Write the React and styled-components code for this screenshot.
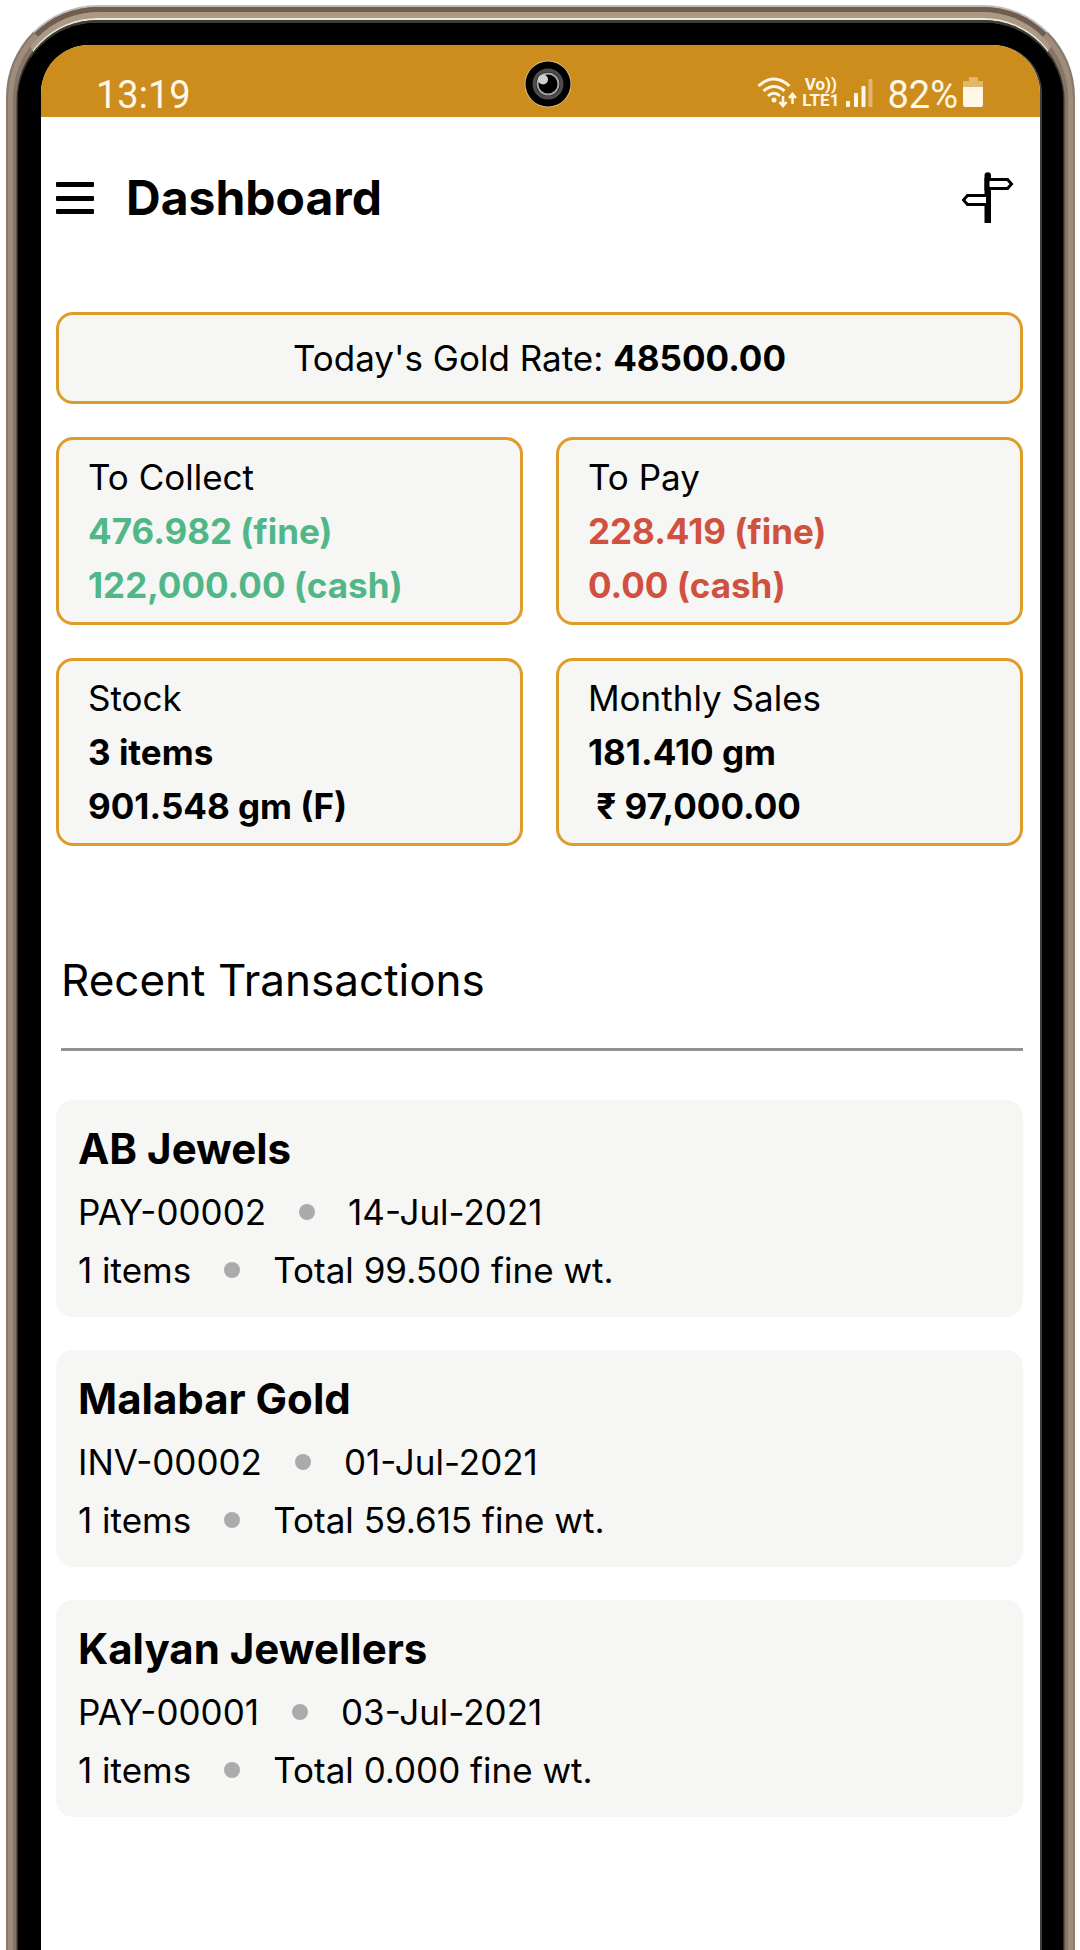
import React from "react";
import styled, { createGlobalStyle } from "styled-components";

const GlobalStyle = createGlobalStyle`
  *, *::before, *::after { box-sizing: border-box; }
  body { margin: 0; background: #fff; color: #000; font-family: Inter, "Open Sans", sans-serif; }
  h1, h2, h3, p, ul, dl, dd, dt { margin: 0; padding: 0; }
`;

const Page = styled.div`
  display: flex;
  min-height: 100vh;
  padding: 5px 5px 0 6px;
`;

/* One metal layer of the phone's bezel */
const Ring = styled.div`
  flex: 1;
  display: flex;
  min-width: 0;
  border-style: solid;
  border-width: ${(p) => p.$top}px ${(p) => p.$side}px 0;
  border-color: ${(p) => p.$topColor} ${(p) => p.$sideColor} transparent;
  border-radius: ${(p) => p.$radius}px ${(p) => p.$radius}px 0 0;
  background: ${(p) => p.$fill};
`;

const Bezel = styled.div`
  flex: 1;
  display: flex;
  min-width: 0;
  padding: 22px 23px 0;
  background: #000;
  border-radius: 78px 78px 0 0;
`;

const Screen = styled.div`
  flex: 1;
  min-width: 0;
  background: #fff;
  border-radius: 48px 48px 0 0;
  box-shadow: 2px 0 0 #3f4041;
`;

const StatusBar = styled.div`
  position: relative;
  display: flex;
  justify-content: space-between;
  align-items: flex-end;
  height: 72px;
  padding: 0 57px 9px 55px;
  border-radius: 48px 48px 0 0;
  background: #cd8d1d;
  color: #fff7e8;
  font-family: Roboto, sans-serif;
`;

const StatusText = styled.span`
  font-size: 38px;
  line-height: 26px;
`;

const StatusIcons = styled.div`
  display: flex;
  align-items: flex-end;
`;

const Network = styled.span`
  display: flex;
  flex-direction: column;
  align-items: center;
  margin: 0 7px 0 4px;
  font-size: 17px;
  font-weight: 700;
  line-height: 16px;
`;

const Percent = styled(StatusText)`
  margin: 0 5px 0 14px;
`;

const Camera = styled.svg`
  position: absolute;
  top: 14px;
  left: 50%;
  width: 50px;
  height: 50px;
  margin-left: -18px;
`;

const Header = styled.header`
  display: flex;
  align-items: center;
  padding: 51px 26px 84px 15px;
`;

const IconButton = styled.button`
  display: flex;
  padding: 0;
  border: 0;
  background: none;
  color: inherit;
`;

const Title = styled.h1`
  flex: 1;
  margin-left: 32px;
  font-size: 48px;
  font-weight: 700;
  line-height: 60px;
`;

const Main = styled.main`
  padding: 0 17px 40px 15px;
`;

const RateCard = styled.p`
  padding: 16px 20px;
  border: 3px solid #df9c28;
  border-radius: 17px;
  background: #f6f6f4;
  font-size: 35px;
  line-height: 54px;
  text-align: center;
`;

const Stats = styled.section`
  display: grid;
  grid-template-columns: 1fr 1fr;
  gap: 33px;
  margin-top: 33px;
`;

const StatCard = styled.dl`
  padding: 10px 29px;
  border: 3px solid #df9c28;
  border-radius: 17px;
  background: #f6f6f4;
  font-size: 35px;
  line-height: 54px;
`;

const StatValue = styled.dd`
  color: ${(p) => p.$color};
  font-weight: 700;
  white-space: pre;
`;

const SectionTitle = styled.h2`
  margin: 104px 0 49px 5px;
  padding-bottom: 38px;
  border-bottom: 3px solid #929292;
  font-size: 44px;
  font-weight: 400;
  line-height: 60px;
`;

const Transactions = styled.ul`
  display: flex;
  flex-direction: column;
  gap: 33px;
  list-style: none;
`;

const Transaction = styled.li`
  padding: 19px 22px 18px;
  border-radius: 17px;
  background: #f6f6f4;
`;

const Party = styled.h3`
  margin-bottom: 4px;
  font-size: 42px;
  font-weight: 700;
  line-height: 60px;
`;

const Detail = styled.p`
  display: flex;
  align-items: center;
  gap: 33px;
  font-size: 35px;
  line-height: 58px;
`;

const Dot = styled.span`
  width: 16px;
  height: 16px;
  border-radius: 50%;
  background: #ababab;
`;

const stats = [
  { label: "To Collect", color: "#52b788", values: ["476.982 (fine)", "122,000.00 (cash)"] },
  { label: "To Pay", color: "#d05140", values: ["228.419 (fine)", "0.00 (cash)"] },
  { label: "Stock", color: "#000", values: ["3 items", "901.548 gm (F)"] },
  { label: "Monthly Sales", color: "#000", values: ["181.410 gm", " ₹ 97,000.00"] },
];

const transactions = [
  { party: "AB Jewels", number: "PAY-00002", date: "14-Jul-2021", items: "1 items", total: "Total 99.500 fine wt." },
  { party: "Malabar Gold", number: "INV-00002", date: "01-Jul-2021", items: "1 items", total: "Total 59.615 fine wt." },
  { party: "Kalyan Jewellers", number: "PAY-00001", date: "03-Jul-2021", items: "1 items", total: "Total 0.000 fine wt." },
];

function WifiIcon() {
  return (
    <svg width="41" height="31" viewBox="0 0 41 31" fill="none" stroke="currentColor" strokeWidth="3">
      <path d="M1.500 9 Q17 -5 32.500 9" />
      <path d="M6.500 14 Q17 5 27.500 14" />
      <path d="M11 19 Q17 13.500 23 19" />
      <circle cx="17" cy="23" r="2.500" fill="currentColor" stroke="none" />
      <path d="M26 19v9M22.500 25l3.500 4 3.500-4M35.500 27v-9M32 21l3.500-4 3.500 4" strokeWidth="2.500" />
    </svg>
  );
}

function SignalIcon() {
  return (
    <svg width="27" height="29" viewBox="0 0 27 29" fill="currentColor">
      <rect x="0" y="22" width="4" height="6" rx="1" />
      <rect x="8" y="14" width="4" height="14" rx="1" />
      <rect x="15.500" y="7" width="4" height="21" rx="1" />
      <rect x="22.500" y="0" width="4" height="28" rx="1" opacity="0.4" />
    </svg>
  );
}

function BatteryIcon() {
  return (
    <svg width="20" height="31" viewBox="0 0 20 31" fill="currentColor">
      <path d="M6 0h9v4h5v6H0V4h6z" opacity="0.4" />
      <path d="M0 10h20v18a2 2 0 0 1-2 2H2a2 2 0 0 1-2-2z" />
    </svg>
  );
}

function MenuIcon() {
  return (
    <svg width="38" height="32" viewBox="0 0 38 32">
      <rect width="38" height="5" rx="1" />
      <rect y="14" width="38" height="5" rx="1" />
      <rect y="27" width="38" height="5" rx="1" />
    </svg>
  );
}

function SignpostIcon() {
  return (
    <svg width="52" height="52" viewBox="0 0 52 52">
      <path d="M22.500 51V3.500a3.200 3.200 0 0 1 6.500 0V51z" />
      <path d="M26 7.500h19.500l4 4.500-4 4.500H26z" fill="#fff" stroke="#000" strokeWidth="3" />
      <path d="M25.500 23.500h-20l-4 4.500 4 4.500h20z" fill="#fff" stroke="#000" strokeWidth="3" />
      <path d="M22.500 6H25v12.500h-2.500zM26 21.500h3v12.500h-3z" />
    </svg>
  );
}

function CameraLens() {
  return (
    <Camera viewBox="0 0 50 50" aria-hidden="true">
      <circle cx="25" cy="25" r="23.500" fill="#d9b878" />
      <circle cx="25" cy="25" r="22.500" fill="#000" />
      <circle cx="25" cy="25" r="15.500" fill="#4c4c4c" />
      <circle cx="25" cy="25" r="12" fill="#000" />
      <circle cx="25" cy="25" r="10.500" fill="none" stroke="#a5a5a5" strokeWidth="2" />
      <circle cx="20" cy="20.500" r="5" fill="#cfcfcf" />
    </Camera>
  );
}

export default function App() {
  return (
    <Page>
      <GlobalStyle />
      <Ring $top={2} $side={2} $radius={92} $topColor="#bdbcba" $sideColor="#8a7b6c" $fill="#6f5e4d">
        <Ring $top={5} $side={5} $radius={90} $topColor="#6f5e4d" $sideColor="#a08c7a" $fill="#a08c7a">
          <Ring $top={6} $side={3} $radius={86} $topColor="#ab9885" $sideColor="#84756a" $fill="#ab9885">
            <Ring $top={2} $side={1} $radius={82} $topColor="#efe9dc" $sideColor="#5f5248" $fill="#3c3c34">
              <Ring $top={3} $side={1} $radius={80} $topColor="#3c3c34" $sideColor="#352d28" $fill="#000">
                <Bezel>
                  <Screen>
                    <StatusBar>
                      <StatusText>13:19</StatusText>
                      <CameraLens />
                      <StatusIcons>
                        <WifiIcon />
                        <Network>
                          <span>Vo))</span>
                          <span>LTE1</span>
                        </Network>
                        <SignalIcon />
                        <Percent>82%</Percent>
                        <BatteryIcon />
                      </StatusIcons>
                    </StatusBar>
                    <Header>
                      <IconButton aria-label="Menu">
                        <MenuIcon />
                      </IconButton>
                      <Title>Dashboard</Title>
                      <IconButton aria-label="Guide">
                        <SignpostIcon />
                      </IconButton>
                    </Header>
                    <Main>
                      <RateCard>
                        Today's Gold Rate: <b>48500.00</b>
                      </RateCard>
                      <Stats>
                        {stats.map((s) => (
                          <StatCard key={s.label}>
                            <dt>{s.label}</dt>
                            {s.values.map((v) => (
                              <StatValue key={v} $color={s.color}>
                                {v}
                              </StatValue>
                            ))}
                          </StatCard>
                        ))}
                      </Stats>
                      <SectionTitle>Recent Transactions</SectionTitle>
                      <Transactions>
                        {transactions.map((t) => (
                          <Transaction key={t.number}>
                            <Party>{t.party}</Party>
                            <Detail>
                              <span>{t.number}</span>
                              <Dot />
                              <span>{t.date}</span>
                            </Detail>
                            <Detail>
                              <span>{t.items}</span>
                              <Dot />
                              <span>{t.total}</span>
                            </Detail>
                          </Transaction>
                        ))}
                      </Transactions>
                    </Main>
                  </Screen>
                </Bezel>
              </Ring>
            </Ring>
          </Ring>
        </Ring>
      </Ring>
    </Page>
  );
}
